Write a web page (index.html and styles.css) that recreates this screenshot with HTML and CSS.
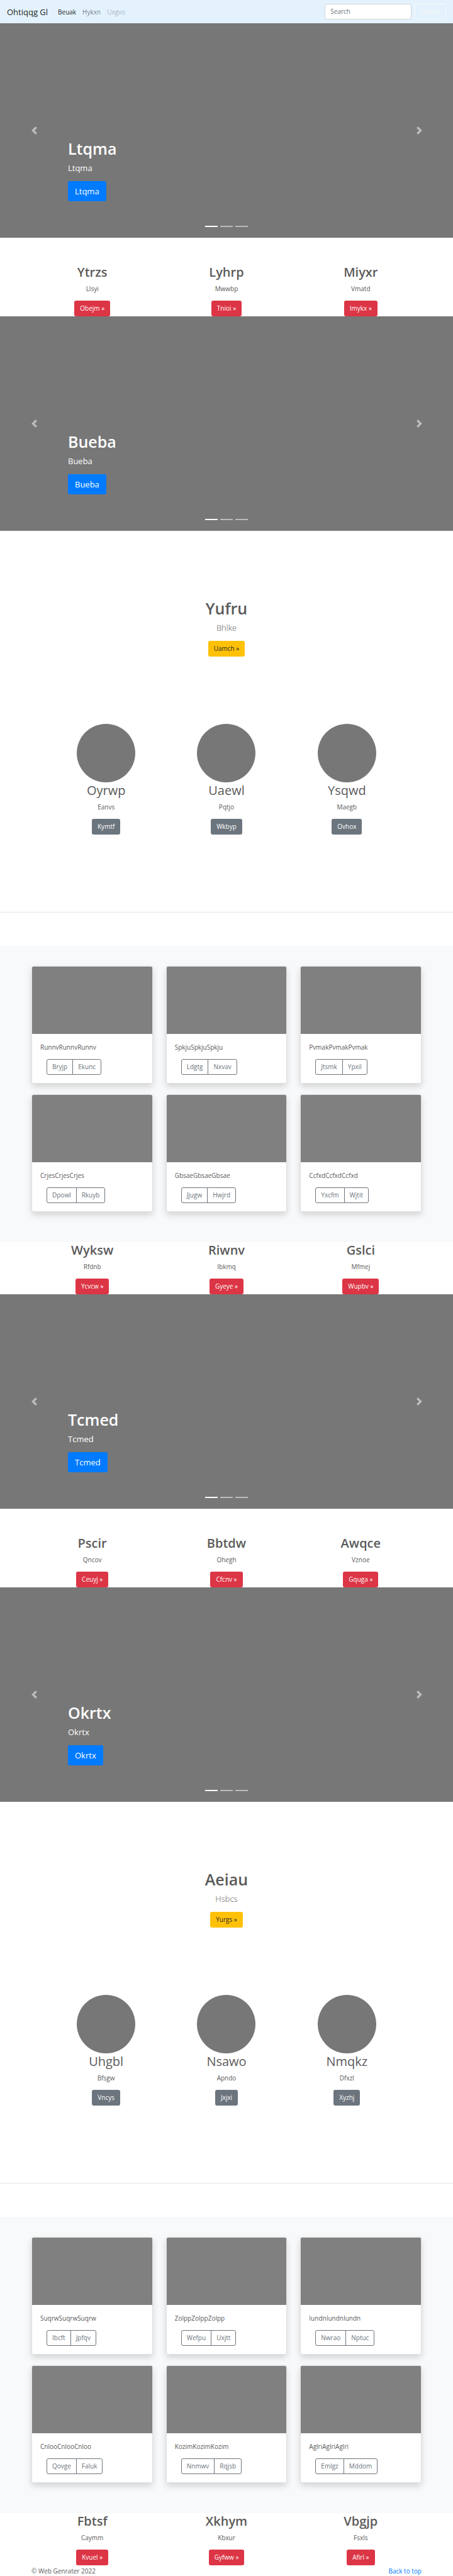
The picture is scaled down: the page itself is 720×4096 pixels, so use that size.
FILE: index.html
```html
<!DOCTYPE html>
<html lang="en">
<head>
<meta charset="utf-8">
<title>Ohtiqqg Gl</title>
<link rel="stylesheet" href="styles.css">
</head>
<body>
<svg class="defs" aria-hidden="true">
  <symbol id="prev" viewBox="0 0 8 8"><path d="M5.25 0l-4 4 4 4 1.5-1.5-2.5-2.5 2.5-2.5-1.5-1.5z"/></symbol>
  <symbol id="next" viewBox="0 0 8 8"><path d="M2.75 0l-1.5 1.5 2.5 2.5-2.5 2.5 1.5 1.5 4-4-4-4z"/></symbol>
</svg>
<header class="navbar" id="top">
  <a class="brand" href="#">Ohtiqqg Gl</a>
  <nav class="nav">
    <a class="nav-link active" href="#">Beuak</a>
    <a class="nav-link" href="#">Hykxn</a>
    <a class="nav-link disabled" href="#">Uxgvo</a>
  </nav>
  <form class="search">
    <input class="search-input" type="search" placeholder="Search" aria-label="Search">
    <button class="btn btn-outline-light" type="button">Search</button>
  </form>
</header>
<main>
  <section class="carousel">
    <button class="control" type="button" aria-label="Previous"><svg class="arrow"><use href="#prev"/></svg></button>
    <div class="caption">
      <h1 class="title">Ltqma</h1>
      <p class="lead">Ltqma</p>
      <a class="btn btn-lg btn-primary" href="#">Ltqma</a>
    </div>
    <button class="control" type="button" aria-label="Next"><svg class="arrow"><use href="#next"/></svg></button>
    <div class="indicators"><span class="dash on"></span><span class="dash"></span><span class="dash"></span></div>
  </section>

  <section class="features spaced">
    <div class="feature"><h2 class="heading strong">Ytrzs</h2><p class="text">Llsyi</p><a class="btn btn-danger" href="#">Obejm »</a></div>
    <div class="feature"><h2 class="heading strong">Lyhrp</h2><p class="text">Mwwbp</p><a class="btn btn-danger" href="#">Tnioi »</a></div>
    <div class="feature"><h2 class="heading strong">Miyxr</h2><p class="text">Vmatd</p><a class="btn btn-danger" href="#">Imykx »</a></div>
  </section>

  <section class="carousel">
    <button class="control" type="button" aria-label="Previous"><svg class="arrow"><use href="#prev"/></svg></button>
    <div class="caption">
      <h1 class="title">Bueba</h1>
      <p class="lead">Bueba</p>
      <a class="btn btn-lg btn-primary" href="#">Bueba</a>
    </div>
    <button class="control" type="button" aria-label="Next"><svg class="arrow"><use href="#next"/></svg></button>
    <div class="indicators"><span class="dash on"></span><span class="dash"></span><span class="dash"></span></div>
  </section>

  <section class="hero">
    <h1 class="title">Yufru</h1>
    <p class="lead light">Bhlke</p>
    <a class="btn btn-warning" href="#">Uamch »</a>
  </section>
  <section class="people">
    <div class="feature"><div class="circle"></div><h2 class="heading">Oyrwp</h2><p class="text">Eanvs</p><a class="btn btn-secondary" href="#">Kymtf</a></div>
    <div class="feature"><div class="circle"></div><h2 class="heading">Uaewl</h2><p class="text">Pqtjo</p><a class="btn btn-secondary" href="#">Wkbyp</a></div>
    <div class="feature"><div class="circle"></div><h2 class="heading">Ysqwd</h2><p class="text">Maegb</p><a class="btn btn-secondary" href="#">Ovhox</a></div>
  </section>
  <hr class="divider">

  <section class="album">
    <div class="cards">
      <article class="card"><div class="thumb"></div><div class="card-body"><p class="text">RunnvRunnvRunnv</p><div class="group"><button class="btn btn-outline" type="button">Bryjp</button><button class="btn btn-outline" type="button">Ekunc</button></div></div></article>
      <article class="card"><div class="thumb"></div><div class="card-body"><p class="text">SpkjuSpkjuSpkju</p><div class="group"><button class="btn btn-outline" type="button">Ldgtg</button><button class="btn btn-outline" type="button">Nxvav</button></div></div></article>
      <article class="card"><div class="thumb"></div><div class="card-body"><p class="text">PvmakPvmakPvmak</p><div class="group"><button class="btn btn-outline" type="button">Jtsmk</button><button class="btn btn-outline" type="button">Ypxil</button></div></div></article>
      <article class="card"><div class="thumb"></div><div class="card-body"><p class="text">CrjesCrjesCrjes</p><div class="group"><button class="btn btn-outline" type="button">Dpowl</button><button class="btn btn-outline" type="button">Rkuyb</button></div></div></article>
      <article class="card"><div class="thumb"></div><div class="card-body"><p class="text">GbsaeGbsaeGbsae</p><div class="group"><button class="btn btn-outline" type="button">Jjugw</button><button class="btn btn-outline" type="button">Hwjrd</button></div></div></article>
      <article class="card"><div class="thumb"></div><div class="card-body"><p class="text">CcfxdCcfxdCcfxd</p><div class="group"><button class="btn btn-outline" type="button">Yxcfm</button><button class="btn btn-outline" type="button">Wjtit</button></div></div></article>
    </div>
  </section>

  <section class="features">
    <div class="feature"><h2 class="heading strong">Wyksw</h2><p class="text">Rfdnb</p><a class="btn btn-danger" href="#">Ycvcw »</a></div>
    <div class="feature"><h2 class="heading strong">Riwnv</h2><p class="text">Ibkmq</p><a class="btn btn-danger" href="#">Gyeye »</a></div>
    <div class="feature"><h2 class="heading strong">Gslci</h2><p class="text">Mfmej</p><a class="btn btn-danger" href="#">Wupbv »</a></div>
  </section>

  <section class="carousel">
    <button class="control" type="button" aria-label="Previous"><svg class="arrow"><use href="#prev"/></svg></button>
    <div class="caption">
      <h1 class="title">Tcmed</h1>
      <p class="lead">Tcmed</p>
      <a class="btn btn-lg btn-primary" href="#">Tcmed</a>
    </div>
    <button class="control" type="button" aria-label="Next"><svg class="arrow"><use href="#next"/></svg></button>
    <div class="indicators"><span class="dash on"></span><span class="dash"></span><span class="dash"></span></div>
  </section>

  <section class="features spaced">
    <div class="feature"><h2 class="heading strong">Pscir</h2><p class="text">Qncov</p><a class="btn btn-danger" href="#">Ceuyj »</a></div>
    <div class="feature"><h2 class="heading strong">Bbtdw</h2><p class="text">Ohegh</p><a class="btn btn-danger" href="#">Cfcnv »</a></div>
    <div class="feature"><h2 class="heading strong">Awqce</h2><p class="text">Vznoe</p><a class="btn btn-danger" href="#">Gquga »</a></div>
  </section>

  <section class="carousel">
    <button class="control" type="button" aria-label="Previous"><svg class="arrow"><use href="#prev"/></svg></button>
    <div class="caption">
      <h1 class="title">Okrtx</h1>
      <p class="lead">Okrtx</p>
      <a class="btn btn-lg btn-primary" href="#">Okrtx</a>
    </div>
    <button class="control" type="button" aria-label="Next"><svg class="arrow"><use href="#next"/></svg></button>
    <div class="indicators"><span class="dash on"></span><span class="dash"></span><span class="dash"></span></div>
  </section>

  <section class="hero">
    <h1 class="title">Aeiau</h1>
    <p class="lead light">Hsbcs</p>
    <a class="btn btn-warning" href="#">Yurgs »</a>
  </section>
  <section class="people">
    <div class="feature"><div class="circle"></div><h2 class="heading">Uhgbl</h2><p class="text">Bfsgw</p><a class="btn btn-secondary" href="#">Vncys</a></div>
    <div class="feature"><div class="circle"></div><h2 class="heading">Nsawo</h2><p class="text">Apndo</p><a class="btn btn-secondary" href="#">Jxjxi</a></div>
    <div class="feature"><div class="circle"></div><h2 class="heading">Nmqkz</h2><p class="text">Dfxzl</p><a class="btn btn-secondary" href="#">Xyzhj</a></div>
  </section>
  <hr class="divider">

  <section class="album">
    <div class="cards">
      <article class="card"><div class="thumb"></div><div class="card-body"><p class="text">SuqrwSuqrwSuqrw</p><div class="group"><button class="btn btn-outline" type="button">Ibcft</button><button class="btn btn-outline" type="button">Jpfqv</button></div></div></article>
      <article class="card"><div class="thumb"></div><div class="card-body"><p class="text">ZolppZolppZolpp</p><div class="group"><button class="btn btn-outline" type="button">Wefpu</button><button class="btn btn-outline" type="button">Uxjtt</button></div></div></article>
      <article class="card"><div class="thumb"></div><div class="card-body"><p class="text">IundnIundnIundn</p><div class="group"><button class="btn btn-outline" type="button">Nwrao</button><button class="btn btn-outline" type="button">Nptuc</button></div></div></article>
      <article class="card"><div class="thumb"></div><div class="card-body"><p class="text">CnlooCnlooCnloo</p><div class="group"><button class="btn btn-outline" type="button">Qovge</button><button class="btn btn-outline" type="button">Faluk</button></div></div></article>
      <article class="card"><div class="thumb"></div><div class="card-body"><p class="text">KozimKozimKozim</p><div class="group"><button class="btn btn-outline" type="button">Nnmwv</button><button class="btn btn-outline" type="button">Rqjsb</button></div></div></article>
      <article class="card"><div class="thumb"></div><div class="card-body"><p class="text">AglriAglriAglri</p><div class="group"><button class="btn btn-outline" type="button">Emlgz</button><button class="btn btn-outline" type="button">Mddom</button></div></div></article>
    </div>
  </section>

  <section class="features">
    <div class="feature"><h2 class="heading strong">Fbtsf</h2><p class="text">Caymm</p><a class="btn btn-danger" href="#">Kvuel »</a></div>
    <div class="feature"><h2 class="heading strong">Xkhym</h2><p class="text">Kbxur</p><a class="btn btn-danger" href="#">Gyfww »</a></div>
    <div class="feature"><h2 class="heading strong">Vbgjp</h2><p class="text">Fsxls</p><a class="btn btn-danger" href="#">Afirl »</a></div>
  </section>
</main>
<footer class="footer">
  <span>© Web Genrater 2022</span>
  <a class="top-link" href="#top">Back to top</a>
</footer>
</body>
</html>
```
FILE: styles.css
```css
* { box-sizing: border-box; }
body {
  margin: 0;
  background: #fff;
  color: #5a5a5a;
  font: 10px/16px "Open Sans", "Noto Sans", sans-serif;
}
h1, h2, p { margin: 0; }
a { text-decoration: none; }
.defs { display: none; }

.btn {
  display: inline-block;
  padding: 4px 8px;
  border: 1px solid transparent;
  border-radius: 3px;
  background: none;
  color: #fff;
  font: inherit;
  line-height: 15px;
}
.btn-lg { padding: 5px 10px; font-size: 13px; line-height: 20px; }
.btn-primary { background: #007bff; }
.btn-danger { background: #dc3545; }
.btn-warning { background: #ffc107; color: #212529; }
.btn-secondary { background: #6c757d; }
.btn-outline { border-color: #6c757d; color: #6c757d; }
.btn-outline-light { border-color: #f8f9fa; color: #f8f9fa; }

.navbar {
  display: flex;
  align-items: center;
  padding: 6px 11px;
  background: #e3f2fd;
}
.brand { margin-right: 11px; color: rgba(0, 0, 0, .9); font-size: 13px; }
.nav { display: flex; flex: 1; }
.nav-link { padding: 0 5px; color: rgba(0, 0, 0, .5); }
.nav-link.active { color: rgba(0, 0, 0, .9); }
.nav-link.disabled { color: rgba(0, 0, 0, .3); }
.search { display: flex; gap: 5px; }
.search-input {
  width: 138px;
  padding: 4px 8px;
  border: 1px solid #ced4da;
  border-radius: 3px;
  background: #fff;
  color: #495057;
  font: inherit;
  line-height: 15px;
}
.search-input::placeholder { color: #6c757d; opacity: 1; }

.carousel {
  position: relative;
  display: grid;
  grid-template-columns: 15% 1fr 15%;
  min-height: 341px;
  background: #777;
  color: #fff;
}
.control {
  display: flex;
  align-items: center;
  justify-content: center;
  padding: 0;
  border: 0;
  background: none;
  opacity: .5;
}
.arrow { width: 13px; height: 13px; fill: #fff; }
.caption { align-self: end; padding-bottom: 58px; }
.title { margin-bottom: 5px; font-size: 25px; font-weight: 600; line-height: 32px; }
.lead { margin-bottom: 11px; font-size: 13px; line-height: 20px; }
.light { font-weight: 300; }
.caption .btn { display: inline-block; vertical-align: top; }
.indicators {
  position: absolute;
  right: 0;
  bottom: 17px;
  left: 0;
  display: flex;
  justify-content: center;
  gap: 4px;
}
.dash { width: 20px; height: 2px; background: #fff; opacity: .5; }
.dash.on { opacity: 1; }

.features, .people {
  display: grid;
  grid-template-columns: repeat(3, 1fr);
  max-width: 640px;
  margin: 0 auto;
}
.spaced { padding-top: 42px; }
.feature { display: flex; flex-direction: column; align-items: center; }
.heading { margin-bottom: 5px; font-size: 20px; font-weight: 400; line-height: 26px; }
.strong { font-weight: 600; }
.text { margin-bottom: 11px; }

.hero {
  display: flex;
  flex-direction: column;
  align-items: center;
  padding: 107px 0;
}
.people { max-width: 574px; }
.circle { width: 93px; height: 93px; border-radius: 50%; background: #777; }
.divider {
  height: 1px;
  margin: 123px 0 53px;
  border: 0;
  background: #e6e6e6;
}

.album { padding: 32px 50px 48px; background: #f8f9fa; }
.cards { display: grid; grid-template-columns: repeat(3, 1fr); gap: 17px 21px; }
.card {
  overflow: hidden;
  border: 1px solid #dfdfdf;
  border-radius: 3px;
  background: #fff;
  box-shadow: 0 5px 11px rgba(0, 0, 0, .15);
}
.thumb { height: 107px; background: #808080; }
.card-body { padding: 13px; }
.group { display: flex; padding-left: 10px; }
.group .btn:first-child { border-radius: 3px 0 0 3px; }
.group .btn:last-child { margin-left: -1px; border-radius: 0 3px 3px 0; }

.footer { display: flex; justify-content: space-between; padding: 1px 50px 0; }
.top-link { color: #007bff; }
```
